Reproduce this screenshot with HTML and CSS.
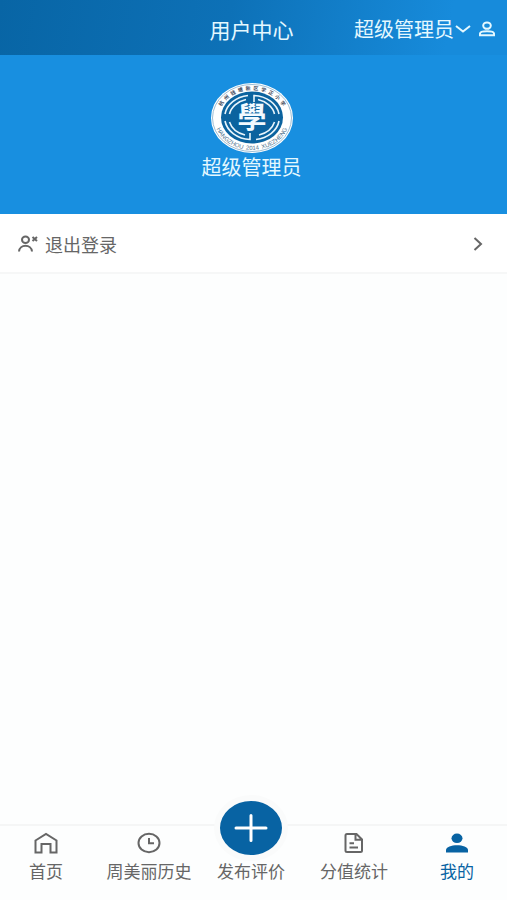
FILE: index.html
```html
<!DOCTYPE html>
<html lang="zh-CN">
<head>
<meta charset="utf-8">
<meta name="viewport" content="width=device-width, initial-scale=1">
<title>用户中心</title>
<link rel="stylesheet" href="styles.css">
</head>
<body>
<header class="topbar">
  <h1 class="topbar-title">用户中心</h1>
  <button class="account" type="button">
    <span>超级管理员</span>
    <svg class="account-arrow" width="16" height="10" viewBox="0 0 16 10" aria-hidden="true"><path d="M1 2 L8 7.5 L15 2"/></svg>
    <svg class="account-user" width="18" height="16" viewBox="0 0 18 16" aria-hidden="true"><ellipse cx="9" cy="4.6" rx="3.8" ry="3.2"/><path d="M2 14.2 V12.6 C2 9.4 16 9.4 16 12.6 V14.2 Z"/></svg>
  </button>
</header>

<section class="profile">
  <svg class="emblem" width="82" height="70" viewBox="0 0 82 70" role="img" aria-label="校徽">
    <defs>
      <path id="ring-top" d="M7 36 A34 29 0 0 1 75 36"/>
      <path id="ring-bottom" d="M3.500 35 A37.500 32 0 0 0 78.500 35"/>
    </defs>
    <ellipse cx="41" cy="35" rx="41" ry="35" fill="#fff"/>
    <ellipse cx="41" cy="35" rx="39.500" ry="33.500" fill="none" stroke="#5b91b5" stroke-width="0.6"/>
    <ellipse cx="41" cy="34.500" rx="31" ry="26" fill="#0b639f"/>
    <g fill="none" stroke="#e8f5fc" stroke-width="1.6">
      <path d="M37 12.500 A27 22 0 0 0 14 31"/>
      <path d="M14 38 A27 22 0 0 0 39 56.500 V50"/>
      <path d="M45 56.500 A27 22 0 0 0 68 38"/>
      <path d="M68 31 A27 22 0 0 0 43 12.500 V19"/>
      <path d="M35 16.500 A23 18.500 0 0 0 18.500 31"/>
      <path d="M18.500 39 A23 18.500 0 0 0 34 52"/>
      <path d="M48 52 A23 18.500 0 0 0 63.500 39"/>
      <path d="M63.500 31 A23 18.500 0 0 0 47 16.500"/>
    </g>
    <text class="emblem-mark" x="41" y="45" text-anchor="middle">學</text>
    <text class="emblem-school"><textPath href="#ring-top" startOffset="50%" text-anchor="middle">杭&#8194;州&#8194;钱&#8194;塘&#8194;新&#8194;区&#8194;学&#8194;正&#8194;小&#8194;学</textPath></text>
    <text class="emblem-latin"><textPath href="#ring-bottom" startOffset="50%" text-anchor="middle">HANGZHOU&#8194;2014&#8194;XUEZHENG</textPath></text>
  </svg>
  <p class="profile-name">超级管理员</p>
</section>

<main class="content">
  <button class="row" type="button">
    <svg class="row-icon" width="20" height="18" viewBox="0 0 20 18" aria-hidden="true">
      <ellipse cx="7.500" cy="4.700" rx="3.500" ry="3.200"/>
      <path d="M1 16.500 C1.500 8.800 13.500 8.800 14 16.500"/>
      <path d="M14.500 2 L19 6 M19 2 L14.500 6"/>
    </svg>
    <span>退出登录</span>
    <svg class="row-arrow" width="10" height="16" viewBox="0 0 10 16" aria-hidden="true"><path d="M1.500 2 L8 8 L1.500 14"/></svg>
  </button>
</main>

<nav class="tabs">
  <a class="tab" href="#home">
    <svg width="26" height="22" viewBox="0 0 26 22" aria-hidden="true"><path d="M2.500 8.500 L13 2 L23.500 8.500 V20.500 H17.500 V12 H8.500 V20.500 H2.500 Z"/></svg>
    <span>首页</span>
  </a>
  <a class="tab" href="#history">
    <svg width="24" height="22" viewBox="0 0 24 22" aria-hidden="true"><ellipse cx="12" cy="11" rx="10.500" ry="9.200"/><path d="M12 6 V11.200 H17"/></svg>
    <span>周美丽历史</span>
  </a>
  <a class="tab tab-publish" href="#publish">
    <span class="publish"><svg width="34" height="28" viewBox="0 0 34 28" aria-hidden="true"><path d="M2 14 H32 M17 1.500 V26.500"/></svg></span>
    <span>发布评价</span>
  </a>
  <a class="tab" href="#stats">
    <svg width="20" height="22" viewBox="0 0 20 22" aria-hidden="true"><path d="M3 2 H12.500 L18 7.500 V18.500 Q18 20 16.500 20 H3 Q1.500 20 1.500 18.500 V3.500 Q1.500 2 3 2 Z M11.500 2.500 V7.800 H17.500 M5.500 11.200 H10 M5.500 15.500 H14"/></svg>
    <span>分值统计</span>
  </a>
  <a class="tab tab-active" href="#me" aria-current="page">
    <svg width="24" height="22" viewBox="0 0 24 22" aria-hidden="true"><ellipse cx="12" cy="6.300" rx="5.500" ry="4.800"/><path d="M1 20.500 V18 C1 11.500 23 11.500 23 18 V20.500 Z"/></svg>
    <span>我的</span>
  </a>
</nav>
</body>
</html>
```
FILE: styles.css
```css
* {
  box-sizing: border-box;
}

body {
  display: flex;
  flex-direction: column;
  min-height: 100vh;
  margin: 0;
  background: #fdfefe;
  color: #666;
  font-family: "Noto Sans CJK SC", sans-serif;
}

button {
  border: 0;
  background: none;
  color: inherit;
  font: inherit;
  cursor: pointer;
}

svg {
  display: block;
  flex: none;
}

.topbar {
  display: grid;
  grid-template-columns: 1fr auto 1fr;
  align-items: center;
  height: 55px;
  padding: 2px 11px 0 7px;
  background: linear-gradient(100deg, #0865a5, #0d71b7 45%, #178bdb 88%);
  color: #e4f8ff;
}

.topbar-title {
  grid-column: 2;
  margin: 0;
  font-size: 21px;
  font-weight: 400;
  line-height: 28px;
}

.account {
  display: flex;
  align-items: center;
  justify-self: end;
  padding: 0;
  font-size: 20px;
  line-height: 28px;
  white-space: nowrap;
}

.account svg {
  fill: none;
  stroke: currentColor;
  stroke-width: 2;
}

.account-arrow {
  margin: 0 7px 0 1px;
}

.profile {
  display: flex;
  flex-direction: column;
  align-items: center;
  height: 159px;
  padding: 28px 4px 0 0;
  background: #188fe0;
  color: #e4f8ff;
}

.profile-name {
  margin: 0;
  font-size: 20px;
  line-height: 28px;
}

.emblem-mark {
  fill: #f2faff;
  font-size: 29px;
  font-weight: 700;
}

.emblem-school {
  fill: #3f4a5c;
  font-size: 5px;
  font-weight: 700;
}

.emblem-latin {
  fill: #4a6f8b;
  font-family: "Liberation Sans", sans-serif;
  font-size: 6px;
}

.content {
  flex: 1;
}

.row {
  display: flex;
  align-items: center;
  gap: 7px;
  width: 100%;
  height: 60px;
  padding: 2px 24px 0 18px;
  border-bottom: 2px solid #f6f7f7;
  background: #fff;
  font-size: 18px;
}

.row svg {
  fill: none;
  stroke: #666;
  stroke-width: 2;
}

.row-arrow {
  margin-left: auto;
}

.tabs {
  display: grid;
  grid-template-columns: 92fr 114fr 90fr 116fr 90fr;
  height: 76px;
  padding-right: 5px;
  border-top: 2px solid #f5f6f6;
  background: #fdfefe;
}

.tab {
  display: flex;
  flex-direction: column;
  align-items: center;
  gap: 3px;
  padding-top: 6px;
  color: #666;
  font-size: 17px;
  line-height: 28px;
  text-decoration: none;
  white-space: nowrap;
}

.tab svg {
  fill: none;
  stroke: currentColor;
  stroke-width: 2;
}

.tab-publish {
  padding-top: 0;
}

.publish {
  display: flex;
  align-items: center;
  justify-content: center;
  width: 74px;
  height: 66px;
  margin-top: -31px;
  margin-bottom: -7px;
  border: 6px solid #fafbfb;
  border-radius: 50%;
  background: #0863a3;
  color: #fff;
}

.tab .publish svg {
  stroke-width: 3;
  stroke-linecap: round;
}

.tab-active {
  color: #0863a3;
}

.tab-active svg {
  fill: currentColor;
  stroke: none;
}
```
